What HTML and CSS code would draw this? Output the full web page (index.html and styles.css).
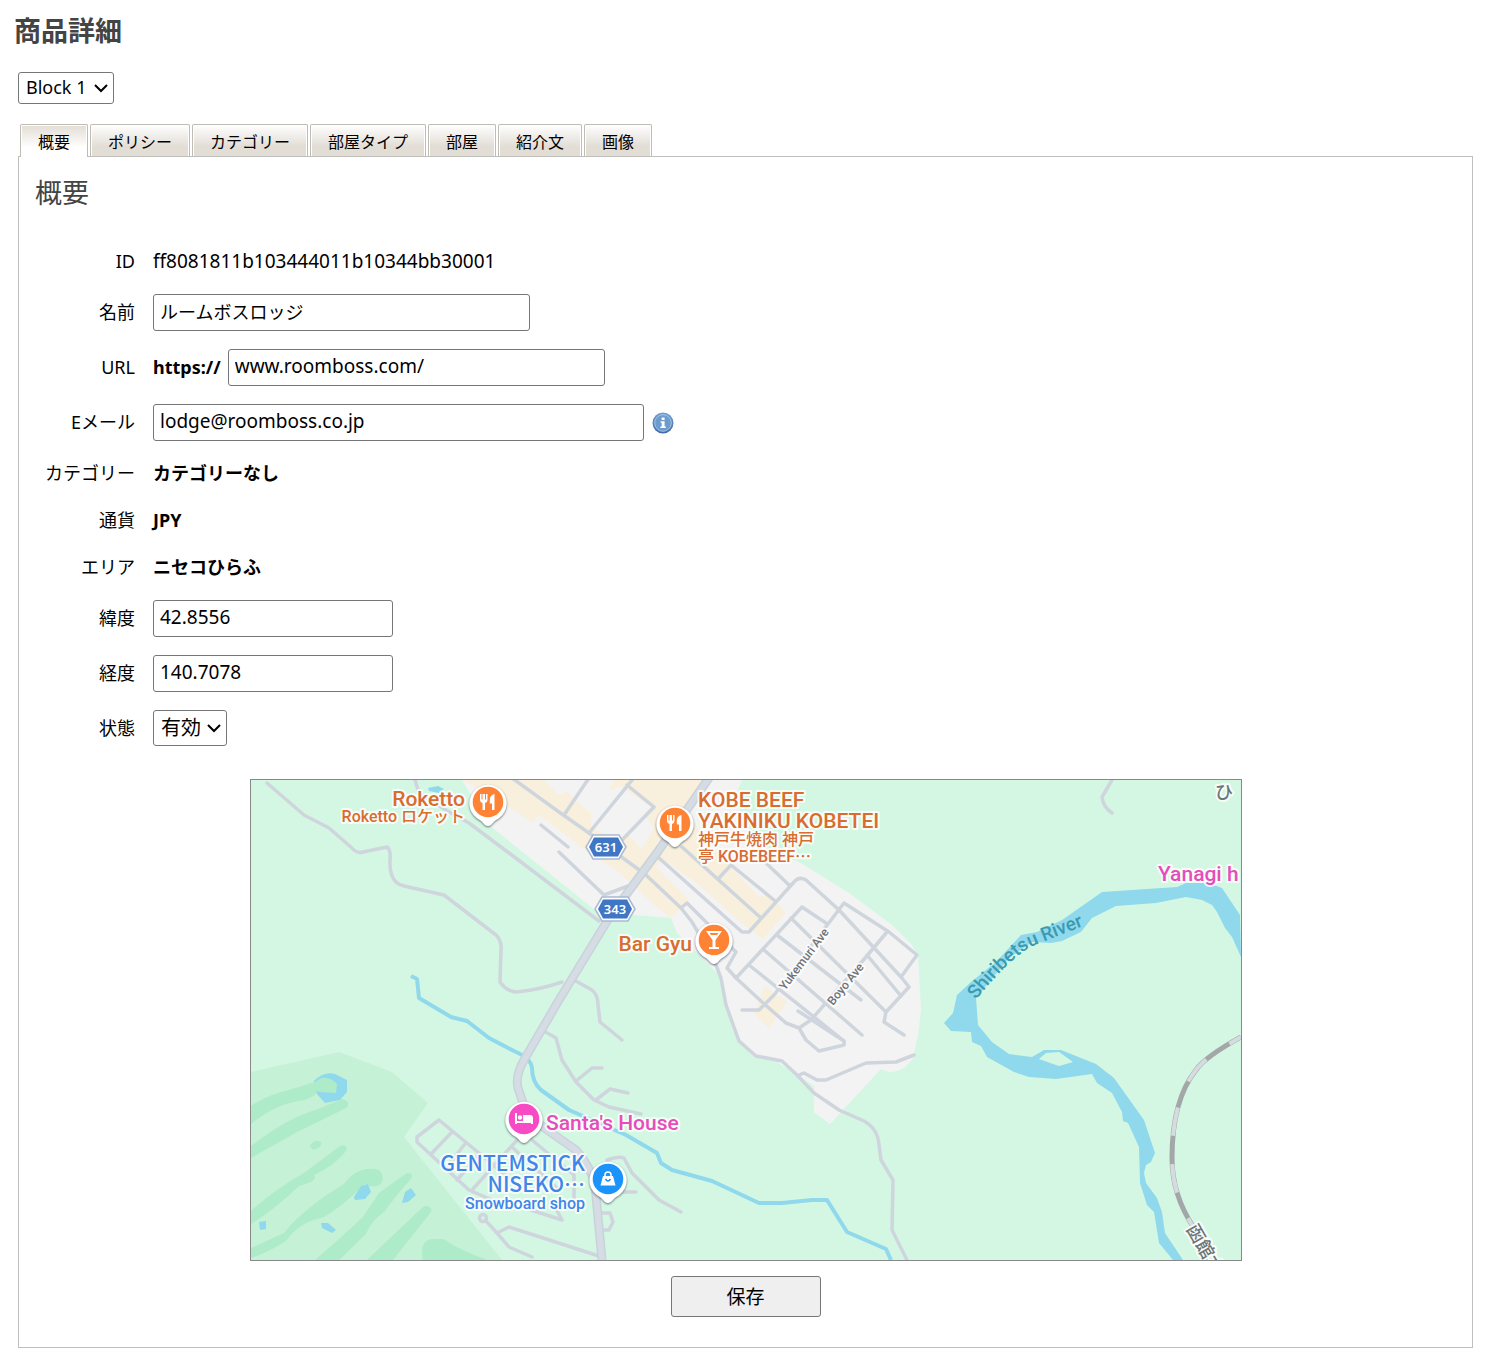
FILE: index.html
```html
<!DOCTYPE html>
<html lang="ja">
<head>
  <meta charset="UTF-8" />
  <meta name="viewport" content="width=device-width, initial-scale=1.0"/>
  <title>商品詳細</title>
  <link rel="stylesheet" href="styles.css">
</head>
<body>
  <h1>商品詳細</h1>

  <div class="container">
    <select class="block-select" aria-label="Block">
      <option>Block 1</option>
    </select>

    <nav class="tabs">
      <a href="#overview" class="tab active">概要</a>
      <a href="#policy" class="tab">ポリシー</a>
      <a href="#category" class="tab">カテゴリー</a>
      <a href="#roomtype" class="tab">部屋タイプ</a>
      <a href="#room" class="tab">部屋</a>
      <a href="#intro" class="tab">紹介文</a>
      <a href="#image" class="tab">画像</a>
    </nav>

    <form class="panel" id="overview">
      <h2>概要</h2>

      <div class="fields">
        <div class="row">
          <span class="label">ID</span>
          <span class="value">ff8081811b103444011b10344bb30001</span>
        </div>
        <div class="row">
          <label class="label" for="name">名前</label>
          <input type="text" id="name" class="medium jp" value="ルームボスロッジ" />
        </div>
        <div class="row">
          <label class="label" for="url">URL</label>
          <b class="scheme">https://</b>
          <input type="text" id="url" class="medium" value="www.roomboss.com/" />
        </div>
        <div class="row">
          <label class="label" for="email">Eメール</label>
          <input type="text" id="email" class="long" value="lodge@roomboss.co.jp" />
          <svg class="info" viewBox="0 0 22 22" role="img" aria-label="info">
            <defs>
              <linearGradient id="infoFill" x1="0" y1="0" x2="0" y2="1">
                <stop offset="0" stop-color="#6fa3d2"/>
                <stop offset="1" stop-color="#4469a8"/>
              </linearGradient>
            </defs>
            <circle cx="11" cy="11" r="10.5" fill="url(#infoFill)"/>
            <circle cx="11" cy="11" r="8.3" fill="#6c9bcd" stroke="#a5c5e4" stroke-width="1"/>
            <path d="M9.6 5.6h3v2.3h-3zM8.6 9.3h4v5.2h1.2v1.5H8.4v-1.5h1.3v-3.7H8.6z" fill="#fff"/>
          </svg>
        </div>
        <div class="row">
          <span class="label">カテゴリー</span>
          <b>カテゴリーなし</b>
        </div>
        <div class="row">
          <span class="label">通貨</span>
          <b>JPY</b>
        </div>
        <div class="row">
          <span class="label">エリア</span>
          <b>ニセコひらふ</b>
        </div>
        <div class="row">
          <label class="label" for="lat">緯度</label>
          <input type="text" id="lat" class="short" value="42.8556" />
        </div>
        <div class="row">
          <label class="label" for="lng">経度</label>
          <input type="text" id="lng" class="short" value="140.7078" />
        </div>
        <div class="row">
          <label class="label" for="status">状態</label>
          <select id="status" class="status-select">
            <option>有効</option>
            <option>無効</option>
          </select>
        </div>
      </div>

      <svg class="map" viewBox="252 780 990 480">
        <defs>
          <filter id="shadow" x="-30%" y="-30%" width="160%" height="160%">
            <feDropShadow dx="0" dy="1" stdDeviation="1.2" flood-color="#345" flood-opacity=".8"/>
          </filter>
          <g id="pin">
            <path d="M0 24C-3 24-5 20-8 18A18.5 18.5 0 1 1 8 18C5 20 3 24 0 24Z" fill="#fff" filter="url(#shadow)"/>
            <circle r="15.3"/>
          </g>
          <path id="fork" d="M-8-8v6q0 2.5 2.5 3V8h2.500V1q2.500-.5 2.500-3V-8H-2v5.500H-3V-8h-2.500v5.500h-1V-8zM6.500-8Q1.800-7 1.800-2V1.500H4V8H6.500z" fill="#fff"/>
          <g id="shield">
            <path d="M-13-12H13L20 0L13 12H-13L-20 0Z" fill="#fff" stroke="#a9b9d3" stroke-width="1.5"/>
            <path d="M-12-9.5H12L17 0L12 9.5H-12L-17 0Z" fill="#3f77c5"/>
          </g>
          <path id="riverLine" d="M977 1000Q1014 954 1036 945T1090 924"/>
        </defs>

        <rect x="252" y="780" width="990" height="480" fill="#d4f7e3"/>

        <!-- golf course -->
        <path d="M252 1072L340 1052L393 1072L429 1103L405 1137L503 1260H252Z" fill="#c5f1d6"/>
        <g fill="#aeebc9">
          <path d="M252 1106Q270 1094 290 1090L316 1082L322 1090Q310 1101 299 1101Q275 1105 252 1124Z"/>
          <path d="M252 1146Q290 1117 317 1110L343 1099Q353 1102 347 1108Q315 1124 300 1131L252 1158Z"/>
          <path d="M252 1211Q275 1190 305 1173L341 1146Q350 1144 347 1151Q335 1166 315 1175Q320 1181 300 1186Q275 1210 252 1224Z"/>
          <path d="M252 1248L285 1233Q305 1208 345 1184Q357 1167 376 1169Q386 1171 383 1182Q378 1190 366 1184Q345 1205 325 1217Q300 1222 287 1241Q270 1252 252 1258Z"/>
          <path d="M316 1260Q345 1235 364 1217L380 1193Q395 1182 408 1173Q416 1173 411 1180Q395 1198 385 1212Q372 1221 367 1234L340 1260Z"/>
          <path d="M368 1260L425 1206Q434 1206 432 1212L394 1260Z"/>
          <path d="M424 1260Q420 1241 433 1239H445Q456 1248 488 1260Z"/>
          <path d="M311 1146Q315 1138 322 1142Q324 1147 314 1150Z"/>
        </g>
        <g fill="#90d9ed">
          <path d="M315 1081Q325 1071 336 1074L348 1080V1092L341 1100L326 1103L318 1094Z"/>
          <path d="M355 1197L362 1186L369 1184L372 1192L366 1199L356 1200Z"/>
          <path d="M403 1203L406 1192L412 1188L417 1195L409 1202Z"/>
          <path d="M260 1222L267 1221L267 1229L261 1230Z"/>
          <path d="M322 1223H329L337 1230L333 1233L323 1228Z"/>
        </g>
        <path d="M315 1083Q326 1072 338 1084L337 1093L321 1092L312 1089Z" fill="#aeebc9"/>

        <!-- town -->
        <path d="M463 780H743L735 800L760 845L800 862L850 893L893 925L912 944L919 955L922 1010L919 1035L914 1058Q905 1072 890 1072L882 1069L831 1124L815 1112V1086L800 1076L778 1062L757 1057L740 1041L727 1005L720 975L700 955L678 933L672 918L598 912L590 905L540 865L490 825Z" fill="#f4f3f4"/>
        <g fill="#f8efdc">
          <path d="M463 780H545L560 795L567 791L590 812L600 810L630 835L660 870L690 900L672 918L655 905L620 872L583 848L567 835L540 815L533 823L527 818L500 800Z"/>
          <path d="M615 780H708L690 812L705 840L735 870L760 897L768 894L787 912L764 939L745 925L700 885L665 860L655 868L640 852L655 828L636 802L610 790Z"/>
          <path d="M766 986L788 1002L770 1028L755 1014Z"/>
        </g>
        <path d="M592 800L621 786L652 807L622 840L592 828Z" fill="#f4f3f4"/>

        <!-- river and streams -->
        <path fill="#90d9ed" fill-rule="evenodd" d="M1241 915L1223 888L1210 883H1187L1178 887L1103 892L1063 920L1038 932L1022 935L997 962L972 982L958 995L954 1013L945 1023L952 1031L972 1032L973 1042L982 1046L988 1057L1015 1072L1030 1077L1057 1079L1093 1074L1098 1083L1113 1093L1123 1112L1124 1121L1129 1123L1140 1147L1141 1183L1148 1205L1155 1212L1160 1243L1174 1260H1184L1166 1233L1163 1212L1158 1198L1147 1183L1145 1173L1147 1165L1152 1162L1156 1153L1145 1120L1115 1078L1097 1064L1062 1050H1045L1033 1057L1010 1054L993 1042L979 1025L977 998L1010 958L1033 942L1052 943L1063 941L1082 932L1093 918L1117 906L1157 903L1187 897L1203 900L1213 905L1218 912L1226 928L1233 937L1242 957ZM1040 1059L1047 1053L1060 1052L1074 1062L1060 1066Z"/>
        <path fill="none" stroke="#90d9ed" stroke-width="4" stroke-linejoin="round" d="M412 976L418 979L420 998L452 1017L468 1021L490 1038L515 1051Q532 1058 533 1068Q533 1082 542 1090L570 1110L627 1135L658 1153L662 1163L673 1170L713 1181L760 1203H783L813 1200H828L848 1232L887 1249L892 1260"/>
        <path d="M429 788L439 786L445 789L440 793L430 791Z" fill="#90d9ed"/>

        <!-- roads -->
        <g fill="none" stroke="#cfd5dc" stroke-width="3.5" stroke-linejoin="round" stroke-linecap="round">
          <path d="M268 783L305 815L330 828L353 848Q358 854 364 852L388 847Q392 850 391 860Q390 883 405 886L445 895L497 935Q503 941 502 950L501 982Q507 991 517 992Q540 990 563 982"/>
          <path d="M416 780L420 793L450 812L470 823L510 853L600 921"/>
          <path d="M513 778L560 812L590 833L647 875L682 908L693 922L715 960L722 978L727 1005L740 1041L757 1056L783 1061L798 1075L815 1093L840 1110L865 1121Q879 1129 880 1145L882 1160L894 1180L893 1230L908 1260"/>
          <path d="M682 908L688 903L700 915L737 952L728 968L737 978L763 1002L787 1023L800 1028L807 1040L820 1051L845 1045V1041L799 1011"/>
          <path d="M737 978L803 907L827 923M792 918L887 1012M778 935L862 1000M765 950L863 1035M750 965L845 1041"/>
          <path d="M743 1010L760 1010L775 995L845 903L890 932L918 955L902 977L910 987L887 1012L885 1022L905 1035"/>
          <path d="M888 932L867 957L812 1020L800 1028M840 910L902 977M868 955L902 996"/>
          <path d="M683 847L762 918M660 858L743 932H750L795 882Q800 876 807 880L840 910M732 865L775 900M720 878L732 865M767 863L790 885"/>
          <path d="M590 778L565 815M638 774L590 833M628 785L655 807L623 840M560 852L605 895L632 885M569 847L542 825"/>
          <path d="M800 1075L805 1073L818 1080H827L867 1063L897 1062L915 1055"/>
          <path d="M575 980L593 990Q599 995 599 1005L601 1022L623 1040"/>
          <path d="M543 1030L557 1038L563 1060L577 1082L595 1100L610 1107L642 1114M577 1081L593 1068H603M597 1100L611 1089L629 1093"/>
          <path d="M440 1120L418 1137V1142L470 1190L500 1203M440 1120L510 1178M452 1133L433 1153M465 1145L448 1167M480 1155L458 1180M473 1190L520 1138M533 1140L575 1175V1198M513 1147L560 1190M532 1210L563 1220L555 1205"/>
          <circle cx="484" cy="1218" r="3.5"/>
          <path d="M487 1221L498 1233L510 1247L533 1257M498 1233L510 1227L603 1257"/>
          <path d="M608 1160Q620 1156 625 1158L633 1173L660 1200L682 1212M623 1192H637M603 1213H611L614 1222L610 1230H605"/>
          <path d="M1113 780L1103 797Q1104 807 1113 813"/>
        </g>
        <g fill="none" stroke="#c9d2db" stroke-width="9" stroke-linejoin="round">
          <path d="M712 775L660 850L610 918L560 1000L525 1060Q516 1076 519 1088L528 1115Q545 1128 577 1150Q592 1167 596 1185L603 1260"/>
          <path stroke="#d5dce4" stroke-width="6" d="M712 775L660 850L610 918L560 1000L525 1060Q516 1076 519 1088L528 1115Q545 1128 577 1150Q592 1167 596 1185L603 1260"/>
        </g>

        <!-- railway -->
        <path fill="none" stroke="#a4a7a7" stroke-width="5" d="M1242 1037Q1206 1057 1197 1070Q1173 1100 1173 1158Q1173 1195 1195 1228"/>
        <path fill="none" stroke="#d6dbe1" stroke-width="4" stroke-dasharray="29 28" stroke-dashoffset="16" d="M1242 1037Q1206 1057 1197 1070Q1173 1100 1173 1158Q1173 1195 1195 1228"/>

        <!-- route numbers -->
        <g class="route">
          <g transform="translate(607 847)"><use href="#shield"/><text y="5">631</text></g>
          <g transform="translate(616 909)"><use href="#shield"/><text y="5">343</text></g>
        </g>

        <!-- place names -->
        <g class="place food">
          <text x="466" y="806" text-anchor="end">Roketto</text>
          <text x="466" y="822" text-anchor="end" class="sub">Roketto ロケット</text>
          <text x="699" y="807">KOBE BEEF</text>
          <text x="699" y="828">YAKINIKU KOBETEI</text>
          <text x="699" y="845" class="sub">神戸牛焼肉 神戸</text>
          <text x="699" y="862" class="sub">亭 KOBEBEEF⋯</text>
          <text x="693" y="951" text-anchor="end">Bar Gyu</text>
        </g>
        <g class="place hotel">
          <text x="547" y="1130">Santa's House</text>
          <text x="1159" y="881">Yanagi h</text>
        </g>
        <g class="place shop">
          <text x="586" y="1171" text-anchor="end" class="cjk">GENTEMSTICK</text>
          <text x="586" y="1192" text-anchor="end" class="cjk">NISEKO⋯</text>
          <text x="586" y="1209" text-anchor="end" class="sub">Snowboard shop</text>
        </g>
        <g class="place street">
          <text transform="translate(786 991) rotate(-53)">Yukemuri Ave</text>
          <text transform="translate(834 1006) rotate(-51)">Boyo Ave</text>
          <text x="1216" y="799" class="area">ひ</text>
          <text transform="translate(1187 1229) rotate(60)" class="area">函館本</text>
        </g>
        <text class="river"><textPath href="#riverLine">Shiribetsu River</textPath></text>

        <!-- pins -->
        <g fill="#ff8334">
          <g transform="translate(489 802)"><use href="#pin"/><use href="#fork"/></g>
          <g transform="translate(676 823)"><use href="#pin"/><use href="#fork"/></g>
          <g transform="translate(715 940)">
            <use href="#pin"/>
            <path d="M-8-9H8L1.500 0V7H5V9H-5V7H-1.500V0ZM-4.500-7L-3-5H3L4.500-7Z" fill="#fff" fill-rule="evenodd"/>
          </g>
        </g>
        <g fill="#f64bc4" transform="translate(525 1119)">
          <use href="#pin"/>
          <path d="M-9-6H-7V2H-1V-4H6Q9-4 9-1V5H7V4H-7V5H-9Z" fill="#fff"/>
          <circle cx="-4" cy="-1.500" r="2.200" fill="#fff"/>
        </g>
        <g fill="#1a93fb" transform="translate(609 1179)">
          <use href="#pin"/>
          <path d="M-5-3H5L7.500 6.500H-7.500Z" fill="#fff"/>
          <path d="M-3-2V-4Q-3-7 0-7T3-4V-2" fill="none" stroke="#fff" stroke-width="1.500"/>
          <path d="M-2.500 0Q0 4 2.500 0" fill="none" stroke="#1a93fb" stroke-width="1.500"/>
        </g>
      </svg>

      <button type="button" class="save-btn">保存</button>
    </form>
  </div>
</body>
</html>
```

FILE: styles.css
```css
* {
  box-sizing: border-box;
}

body {
  margin: 0;
  background: #fff;
  color: #000;
  font-family: "Noto Sans", "Noto Sans CJK JP", sans-serif;
  font-size: 18px;
}

h1 {
  margin: 0;
  padding: 11px 14px 21px;
  color: #444;
  font-size: 27px;
  line-height: 40px;
}

.container {
  padding: 0 16px 11px 18px;
}

select,
input {
  border: 1px solid #767676;
  border-radius: 3px;
  background: #fff;
  color: #000;
  font-family: inherit;
}

select {
  appearance: none;
  padding: 0 7px 2px;
  background: url("data:image/svg+xml,%3Csvg xmlns='http://www.w3.org/2000/svg' width='14' height='10'%3E%3Cpath d='M1 2l6 6 6-6' fill='none' stroke='%23000' stroke-width='2'/%3E%3C/svg%3E") no-repeat right 5px center;
}

.block-select {
  display: block;
  width: 96px;
  height: 32px;
  font-size: 18px;
}

.tabs {
  display: flex;
  gap: 2px;
  margin-top: 20px;
  padding-left: 2px;
}

.tab {
  height: 32px;
  padding: 0 17px;
  border: 1px solid #bfbdb3;
  border-bottom: none;
  border-radius: 2px 2px 0 0;
  background: linear-gradient(#fff, #e2ddd5 70%);
  box-shadow: inset 1px 1px #fff, inset -1px 0 #fff;
  color: #000;
  font-size: 16px;
  line-height: 34px;
  text-decoration: none;
}

.tab.active {
  position: relative;
  z-index: 1;
  height: 33px;
  background: linear-gradient(#e2ddd5, #fff 70%);
}

.panel {
  margin-top: -1px;
  padding: 16px 16px 30px;
  border: 1px solid #bfbfbb;
}

h2 {
  margin: 0;
  color: #444;
  font-size: 27px;
  font-weight: normal;
  line-height: 40px;
}

.fields {
  display: flex;
  flex-direction: column;
  gap: 18px;
  margin-top: 34px;
}

.row {
  display: flex;
  align-items: center;
  line-height: 29px;
}

.label {
  width: 100px;
  margin-right: 18px;
  text-align: right;
}

.value {
  font-size: 19px;
}

.scheme {
  margin-right: 7px;
}

.row input {
  height: 37px;
  padding: 0 6px 3px;
  font-size: 19px;
}

.row input.jp {
  font-size: 18px;
}

.short {
  width: 240px;
}

.medium {
  width: 377px;
}

.long {
  width: 491px;
}

.info {
  width: 22px;
  height: 22px;
  margin-left: 8px;
}

.status-select {
  width: 74px;
  height: 36px;
  font-size: 20px;
}

.map {
  display: block;
  width: 100%;
  max-width: 992px;
  margin: 33px auto 15px;
  border: 1px solid #888;
}

.place text {
  font-family: Roboto, "Noto Sans CJK JP", sans-serif;
  font-size: 21px;
  font-weight: 500;
  stroke: #fff;
  stroke-width: 4px;
  stroke-linejoin: round;
  stroke-opacity: 0.8;
  paint-order: stroke;
}

.place .sub {
  font-size: 16px;
}

.place .cjk {
  font-family: "Noto Sans CJK JP", sans-serif;
}

.food {
  fill: #d96c2f;
}

.hotel {
  fill: #e64cba;
}

.shop {
  fill: #4285e8;
}

.street {
  fill: #6f7377;
}

.place.street text {
  font-size: 12px;
}

.place.street .area {
  font-size: 18px;
}

.river {
  fill: #3a9bb0;
  font-family: Roboto, sans-serif;
  font-size: 19px;
  font-weight: 500;
}

.route text {
  fill: #fff;
  font-family: "Noto Sans", sans-serif;
  font-size: 13px;
  font-weight: 600;
  text-anchor: middle;
}

.save-btn {
  display: block;
  width: 150px;
  height: 41px;
  margin: 0 auto;
  padding: 0 0 2px;
  border: 1px solid #767676;
  border-radius: 3px;
  background: #efefef;
  color: #000;
  font-family: inherit;
  font-size: 19px;
  cursor: pointer;
}
```
